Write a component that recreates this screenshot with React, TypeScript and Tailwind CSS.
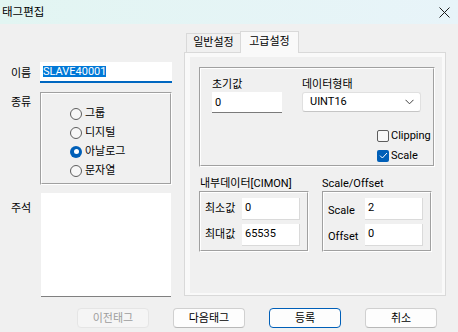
import React from "react";

function Groove({ className = "", children }: { className?: string; children?: React.ReactNode }) {
  return (
    <div className={`border-t border-l border-[#a0a0a0] border-r border-b border-r-white border-b-white ${className}`}>
      <div className="w-full h-full border-t border-l border-white border-r border-b border-r-[#a0a0a0] border-b-[#a0a0a0]">
        {children}
      </div>
    </div>
  );
}

function Radio({ label, checked = false }: { label: string; checked?: boolean }) {
  return (
    <div className="h-[19px] flex items-center">
      {checked ? (
        <div className="w-[12px] h-[12px] rounded-full bg-[#005fb8] flex items-center justify-center">
          <div className="w-[5px] h-[5px] rounded-full bg-white" />
        </div>
      ) : (
        <div className="w-[12px] h-[12px] rounded-full border border-[#5d5d5d] bg-[#f7f7f7]" />
      )}
      <span className="ml-[3px] leading-[14px]">{label}</span>
    </div>
  );
}

function Field({ value, w }: { value: string; w: string }) {
  return (
    <div className={`${w} h-[22px] bg-white border-b border-r border-[#dadada] pl-[3px] pt-[3px] leading-[14px]`}>
      {value}
    </div>
  );
}

function Btn({ label, kind = "normal" }: { label: string; kind?: "normal" | "disabled" | "primary" }) {
  const cls =
    kind === "disabled"
      ? "bg-[#f5f5f5] border-[#e5e5e5] text-[#9d9d9d]"
      : kind === "primary"
      ? "bg-[#fdfdfd] border-[#005fb8] text-black"
      : "bg-[#fdfdfd] border-[#d0d0d0] border-b-[#b8b8b8] text-black";
  return (
    <div className={`w-[72px] h-[20px] rounded-[4px] border flex items-center justify-center leading-none ${cls}`}>
      {label}
    </div>
  );
}

export default function App() {
  return (
    <div className="w-[458px] h-[332px] bg-[#f0f0f0] flex flex-col text-black font-['Roboto','Noto_Sans_CJK_KR',sans-serif] text-[11px] leading-none overflow-hidden">
      {/* title bar */}
      <div className="h-[24px] shrink-0 flex items-center justify-between bg-gradient-to-r from-[#e2f5f2] to-[#e8f4f9] pl-[2px] pr-[8px]">
        <span className="text-[11.5px] leading-[14px]">태그편집</span>
        <svg width="11" height="11" viewBox="0 0 11 11">
          <path d="M0.5 0.5L10.5 10.5M10.5 0.5L0.5 10.5" stroke="#1a1a1a" strokeWidth="1" />
        </svg>
      </div>

      <div className="flex h-[272px] shrink-0">
        {/* left column */}
        <div className="w-[184px] shrink-0 pl-[11px] pt-[38px] flex flex-col">
          <div className="flex">
            <div className="w-[29px] pt-[5px] leading-[14px]">이름</div>
            <div className="w-[132px] h-[21px] bg-white border-b-2 border-[#0067c0] pl-[3px] pt-[4px]">
              <span className="bg-[#0078d7] text-white leading-[11px] inline-block">SLAVE40001</span>
            </div>
          </div>
          <div className="flex mt-[9px]">
            <div className="w-[29px] pt-[4px] leading-[14px]">종류</div>
            <Groove className="w-[132px] h-[93px]">
              <div className="pl-[28px] pt-[10px] flex flex-col">
                <Radio label="그룹" />
                <Radio label="디지털" />
                <Radio label="아날로그" checked />
                <Radio label="문자열" />
              </div>
            </Groove>
          </div>
          <div className="flex mt-[8px]">
            <div className="w-[30px] pt-[9px] leading-[14px]">주석</div>
            <div className="w-[130px] h-[104px] bg-white border-b border-[#808080]" />
          </div>
        </div>

        {/* right column */}
        <div className="flex flex-col pt-[7px]">
          <div className="flex items-end h-[21px] pl-[2px]">
            <div className="w-[54px] h-[19px] border-t border-l border-[#d9d9d9] bg-[#f0f0f0] flex items-center justify-center leading-[14px]">
              일반설정
            </div>
            <div className="relative z-10 w-[59px] h-[22px] -mb-[1px] border-t border-l border-r border-[#d9d9d9] bg-[#f9f9f9] flex items-start justify-center pt-[3px] leading-[14px]">
              고급설정
            </div>
          </div>
          <div className="w-[262px] h-[244px] border border-[#d9d9d9] bg-[#f9f9f9] pl-[5px] pt-[4px] pr-[3px] pb-[2px] flex">
            <div className="flex-1 bg-[#f0f0f0] flex flex-col">
              {/* group 1 */}
              <Groove className="ml-[9px] mt-[10px] w-[236px] h-[100px]">
                <div className="pl-[11px] pt-[9px] flex flex-col">
                  <div className="flex gap-[20px]">
                    <div className="w-[70px] flex flex-col">
                      <div className="h-[14px] leading-[14px]">초기값</div>
                      <div className="h-[21px] bg-white border-b border-[#7a7a7a] pl-[3px] pt-[4px] leading-[14px]">0</div>
                    </div>
                    <div className="w-[119px] flex flex-col">
                      <div className="h-[14px] leading-[14px]">데이터형태</div>
                      <div className="h-[20px] bg-white border border-[#e0e0e0] border-b-[#c5c5c5] rounded-[3px] pl-[7px] pr-[6px] flex items-center justify-between leading-[14px]">
                        <span>UINT16</span>
                        <svg width="9" height="6" viewBox="0 0 9 6">
                          <path d="M0.5 0.8L4.5 4.8L8.5 0.8" fill="none" stroke="#404040" strokeWidth="1" />
                        </svg>
                      </div>
                    </div>
                  </div>
                  <div className="flex flex-col pl-[165px] mt-[16px] gap-[7px]">
                    <div className="flex items-center h-[13px]">
                      <div className="w-[12px] h-[12px] rounded-[2px] border border-[#5d5d5d] bg-[#f7f7f7]" />
                      <span className="ml-[2px] leading-[14px]">Clipping</span>
                    </div>
                    <div className="flex items-center h-[13px]">
                      <div className="w-[12px] h-[12px] rounded-[2px] bg-[#005fb8] flex items-center justify-center">
                        <svg width="9" height="7" viewBox="0 0 9 7">
                          <path d="M1 3.6L3.4 6L8 1" fill="none" stroke="#fff" strokeWidth="1" />
                        </svg>
                      </div>
                      <span className="ml-[2px] leading-[14px]">Scale</span>
                    </div>
                  </div>
                </div>
              </Groove>

              {/* lower groups */}
              <div className="flex ml-[9px] mt-[10px] gap-[13px]">
                <div className="flex flex-col w-[110px]">
                  <div className="h-[14px] leading-[14px] pl-[1px]">내부데이터[CIMON]</div>
                  <Groove className="h-[61px]">
                    <div className="pl-[4px] pt-[5px] flex flex-col gap-[4px]">
                      <div className="flex items-center">
                        <div className="w-[37px] leading-[14px]">최소값</div>
                        <Field value="0" w="w-[58px]" />
                      </div>
                      <div className="flex items-center">
                        <div className="w-[37px] leading-[14px]">최대값</div>
                        <Field value="65535" w="w-[58px]" />
                      </div>
                    </div>
                  </Groove>
                </div>
                <div className="flex flex-col w-[110px]">
                  <div className="h-[14px] leading-[14px]">Scale/Offset</div>
                  <Groove className="h-[61px]">
                    <div className="pl-[4px] pt-[5px] flex flex-col gap-[4px]">
                      <div className="flex items-center">
                        <div className="w-[37px] leading-[14px] pt-[4px]">Scale</div>
                        <Field value="2" w="w-[58px]" />
                      </div>
                      <div className="flex items-center">
                        <div className="w-[37px] leading-[14px] pt-[4px]">Offset</div>
                        <Field value="0" w="w-[58px]" />
                      </div>
                    </div>
                  </Groove>
                </div>
              </div>
            </div>
          </div>
        </div>
      </div>

      {/* buttons */}
      <div className="flex pl-[77px] pt-[12px] gap-[24px]">
        <Btn label="이전태그" kind="disabled" />
        <Btn label="다음태그" />
        <Btn label="등록" kind="primary" />
        <Btn label="취소" />
      </div>
    </div>
  );
}
